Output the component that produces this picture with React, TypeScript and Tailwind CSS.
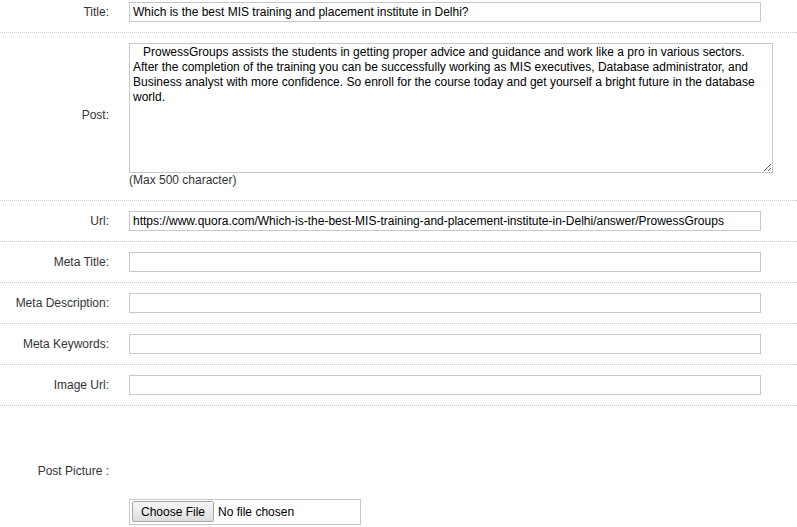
const postText =
  "   ProwessGroups assists the students in getting proper advice and guidance and work like a pro in various sectors. After the completion of the training you can be successfully working as MIS executives, Database administrator, and Business analyst with more confidence. So enroll for the course today and get yourself a bright future in the database world.";

function Row({ label, children, className = "" }: { label: string; children: React.ReactNode; className?: string }) {
  return (
    <div className={"flex items-center border-b border-dotted border-[#c8c8c8] " + className}>
      <div className="w-[109px] shrink-0 text-right text-[12px] text-[#333]">{label}</div>
      <div className="ml-[20px]">{children}</div>
    </div>
  );
}

function TextInput({ value = "" }: { value?: string }) {
  return (
    <input
      type="text"
      defaultValue={value}
      className="block w-[632px] h-[20px] border border-[#c8c8c8] px-[3px] text-[12px] text-black outline-none"
    />
  );
}

export default function App() {
  return (
    <div className="w-[797px] bg-white" style={{ fontFamily: '"Liberation Sans", Arial, sans-serif' }}>
      <Row label="Title:" className="pt-[2px] pb-[10px]">
        <TextInput value="Which is the best MIS training and placement institute in Delhi?" />
      </Row>
      <Row label="Post:" className="pt-[10px] pb-[13px]">
        <textarea
          defaultValue={postText}
          className="block w-[644px] h-[130px] border border-[#c8c8c8] px-[3px] py-[1px] text-[12px] leading-[15px] text-black outline-none"
        />
        <div className="text-[12px] leading-[14px] text-[#333]">(Max 500 character)</div>
      </Row>
      <Row label="Url:" className="py-[10px]">
        <TextInput value="https://www.quora.com/Which-is-the-best-MIS-training-and-placement-institute-in-Delhi/answer/ProwessGroups" />
      </Row>
      <Row label="Meta Title:" className="py-[10px]">
        <TextInput />
      </Row>
      <Row label="Meta Description:" className="py-[10px]">
        <TextInput />
      </Row>
      <Row label="Meta Keywords:" className="py-[10px]">
        <TextInput />
      </Row>
      <Row label="Image Url:" className="py-[10px]">
        <TextInput />
      </Row>
      <div className="flex items-center pt-[10px] pb-[10px]">
        <div className="w-[109px] shrink-0 text-right text-[12px] text-[#333]">Post Picture :</div>
        <div className="ml-[20px]">
          <div className="h-[83px]" />
          <input
            type="file"
            className="block w-[232px] h-[26px] border border-[#c8c8c8] pl-[2px] text-[12px] text-black file:h-[21px] file:mt-[1px] file:px-[8px] file:mr-[4px] file:border file:border-[#a6a6a6] file:rounded-[2px] file:bg-gradient-to-b file:from-[#f6f6f6] file:to-[#dedede] file:text-black"
          />
        </div>
      </div>
    </div>
  );
}
